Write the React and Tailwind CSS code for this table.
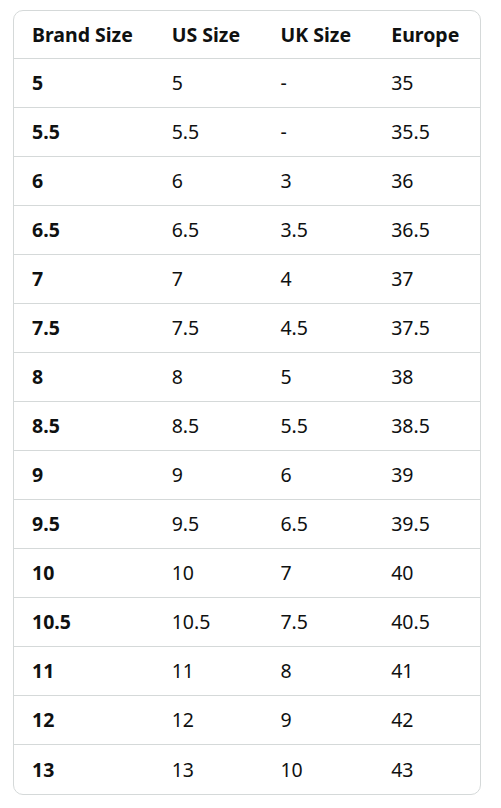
const rows = [
  ["5", "5", "-", "35"],
  ["5.5", "5.5", "-", "35.5"],
  ["6", "6", "3", "36"],
  ["6.5", "6.5", "3.5", "36.5"],
  ["7", "7", "4", "37"],
  ["7.5", "7.5", "4.5", "37.5"],
  ["8", "8", "5", "38"],
  ["8.5", "8.5", "5.5", "38.5"],
  ["9", "9", "6", "39"],
  ["9.5", "9.5", "6.5", "39.5"],
  ["10", "10", "7", "40"],
  ["10.5", "10.5", "7.5", "40.5"],
  ["11", "11", "8", "41"],
  ["12", "12", "9", "42"],
  ["13", "13", "10", "43"],
];

const headers = ["Brand Size", "US Size", "UK Size", "Europe"];
const widths = ["w-[140px]", "w-[109px]", "w-[111px]", "w-[107px]"];

export default function App() {
  return (
    <div className="bg-white min-h-screen pt-[10px] pl-[13px] font-['Noto_Sans',sans-serif] text-[#0f1111]">
      <div className="w-[468px] border border-[#d5d9d9] rounded-[10px] overflow-hidden">
        <div className="flex h-[48px] items-center border-b border-[#d5d9d9]">
          {headers.map((h, i) => (
            <div key={h} className={`${widths[i]} pl-[18px] text-[19.5px] font-bold`}>
              {h}
            </div>
          ))}
        </div>
        {rows.map((r, ri) => (
          <div
            key={ri}
            className={`flex h-[49px] items-center ${ri < rows.length - 1 ? "border-b border-[#d5d9d9]" : ""}`}
          >
            {r.map((c, i) => (
              <div
                key={i}
                className={`${widths[i]} pl-[18px] text-[19.5px] ${i === 0 ? "font-bold" : ""}`}
              >
                {c}
              </div>
            ))}
          </div>
        ))}
      </div>
    </div>
  );
}
